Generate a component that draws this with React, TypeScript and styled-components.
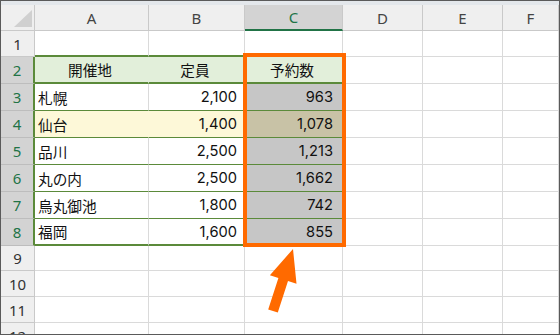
import React from "react";
import styled, { createGlobalStyle } from "styled-components";

const GRID = "#dadada";
const HEAD_BG = "#efefef";
const HEAD_LINE = "#c9c9c9";
const SEL_HEAD_BG = "#d3d3d3";
const SEL_GREEN = "#217346";
const TABLE = "#5b8a3a";
const TABLE_HEAD = "#e2efda";
const SELECTED = "#c6c6c6";
const ORANGE = "#ff6a00";

const Global = createGlobalStyle`
  html, body { margin: 0; padding: 0; background: #fff; }
`;

const Frame = styled.div`
  position: relative;
  box-sizing: border-box;
  width: 560px;
  height: 335px;
  border: 1px solid #5a5a5a;
  overflow: hidden;
  background: #fff;
`;

const TopStrip = styled.div`
  height: 4px;
  background: #e3e7eb;
`;

const Sheet = styled.div`
  display: grid;
  grid-template-columns: 34px 114px 96px 98px 80px 80px 1fr;
  grid-template-rows: 26px 26px repeat(7, 27px) 25px 26px 26px 26px;
`;

const HeadBase = styled.div`
  box-sizing: border-box;
  display: flex;
  align-items: center;
  justify-content: center;
  font-family: "Noto Sans", "Open Sans", sans-serif;
  font-size: 15px;
`;

const Corner = styled(HeadBase)`
  position: relative;
  background: ${HEAD_BG};
  border-right: 1px solid ${HEAD_LINE};
  border-bottom: 1px solid ${HEAD_LINE};

  &::after {
    content: "";
    position: absolute;
    right: 2px;
    bottom: 3px;
    width: 0;
    height: 0;
    border-left: 18px solid transparent;
    border-bottom: 17px solid #d0d0d0;
  }
`;

const ColHead = styled(HeadBase)<{ $selected?: boolean }>`
  background: ${(p) => (p.$selected ? SEL_HEAD_BG : HEAD_BG)};
  color: ${(p) => (p.$selected ? SEL_GREEN : "#444")};
  border-right: 1px solid ${HEAD_LINE};
  border-bottom: ${(p) =>
    p.$selected ? `2px solid ${SEL_GREEN}` : `1px solid ${HEAD_LINE}`};
`;

const RowHead = styled(HeadBase)<{ $selected?: boolean }>`
  background: ${(p) => (p.$selected ? SEL_HEAD_BG : HEAD_BG)};
  color: ${(p) => (p.$selected ? SEL_GREEN : "#333")};
  border-right: ${(p) =>
    p.$selected ? `2px solid ${TABLE}` : `1px solid ${HEAD_LINE}`};
  border-bottom: 1px solid ${(p) => (p.$selected ? "#bdbdbd" : HEAD_LINE)};
`;

type Edge = "grid" | "thin" | "thick";
type Align = "left" | "center" | "right";

const Cell = styled.div<{
  $fill?: string;
  $align?: Align;
  $edge?: Edge;
  $join?: boolean;
  $padR?: number;
}>`
  box-sizing: border-box;
  display: flex;
  align-items: center;
  justify-content: ${(p) =>
    p.$align === "right" ? "flex-end" : p.$align === "center" ? "center" : "flex-start"};
  padding: 0 ${(p) => p.$padR ?? 6}px 0 3px;
  background: ${(p) => p.$fill ?? "#fff"};
  border-right: 1px solid ${(p) => (p.$join ? p.$fill : GRID)};
  border-bottom: ${(p) =>
    p.$edge === "thick"
      ? `2px solid ${TABLE}`
      : p.$edge === "thin"
      ? `1px solid ${TABLE}`
      : `1px solid ${GRID}`};
  color: #111;
  font-family: Inter, "Noto Sans CJK JP", sans-serif;
  font-size: 14.67px;
  white-space: nowrap;
  overflow: hidden;
`;

const Highlight = styled.div`
  position: absolute;
  left: 242px;
  top: 52px;
  width: 103px;
  height: 194px;
  box-sizing: border-box;
  border: 4px solid ${ORANGE};
  pointer-events: none;
`;

const Pointer = styled.svg`
  position: absolute;
  left: 264px;
  top: 245px;
  width: 36px;
  height: 70px;
  pointer-events: none;
`;

const columns = ["A", "B", "C", "D", "E", "F"];

type Row = { place: string; capacity: string; booked: string; tint?: string; tintSel?: string };

const rows: Row[] = [
  { place: "札幌", capacity: "2,100", booked: "963" },
  { place: "仙台", capacity: "1,400", booked: "1,078", tint: "#fdf8d8", tintSel: "#c8c2a6" },
  { place: "品川", capacity: "2,500", booked: "1,213" },
  { place: "丸の内", capacity: "2,500", booked: "1,662" },
  { place: "烏丸御池", capacity: "1,800", booked: "742" },
  { place: "福岡", capacity: "1,600", booked: "855" },
];

const EmptyRow: React.FC<{ n: number; tableTop?: boolean }> = ({ n, tableTop }) => (
  <>
    <RowHead>{n}</RowHead>
    <Cell $edge={tableTop ? "thick" : "grid"} />
    <Cell $edge={tableTop ? "thick" : "grid"} />
    <Cell $edge={tableTop ? "thick" : "grid"} />
    <Cell />
    <Cell />
    <Cell />
  </>
);

export default function App() {
  return (
    <>
      <Global />
      <Frame>
        <TopStrip />
        <Sheet>
          <Corner />
          {columns.map((c) => (
            <ColHead key={c} $selected={c === "C"}>
              {c}
            </ColHead>
          ))}

          <EmptyRow n={1} tableTop />

          <RowHead $selected>2</RowHead>
          <Cell $fill={TABLE_HEAD} $join $align="center" $edge="thick">
            開催地
          </Cell>
          <Cell $fill={TABLE_HEAD} $join $align="center" $edge="thick">
            定員
          </Cell>
          <Cell $fill={TABLE_HEAD} $align="center" $edge="thick">
            予約数
          </Cell>
          <Cell />
          <Cell />
          <Cell />

          {rows.map((r, i) => {
            const last = i === rows.length - 1;
            const edge: Edge = last ? "thick" : "thin";
            return (
              <React.Fragment key={r.place}>
                <RowHead $selected>{i + 3}</RowHead>
                <Cell $fill={r.tint} $join={!!r.tint} $edge={edge}>
                  {r.place}
                </Cell>
                <Cell $fill={r.tint} $align="right" $edge={edge} $padR={7}>
                  {r.capacity}
                </Cell>
                <Cell $fill={r.tintSel ?? SELECTED} $align="right" $edge={edge} $padR={9}>
                  {r.booked}
                </Cell>
                <Cell />
                <Cell />
                <Cell />
              </React.Fragment>
            );
          })}

          {[9, 10, 11, 12].map((n) => (
            <EmptyRow key={n} n={n} />
          ))}
        </Sheet>

        <Highlight />
        <Pointer viewBox="0 0 36 70">
          <polygon
            fill={ORANGE}
            points="28,3 31.5,37.8 23,35 12.8,66.5 3.2,63.5 13.4,32 4.9,29.2"
          />
        </Pointer>
      </Frame>
    </>
  );
}
